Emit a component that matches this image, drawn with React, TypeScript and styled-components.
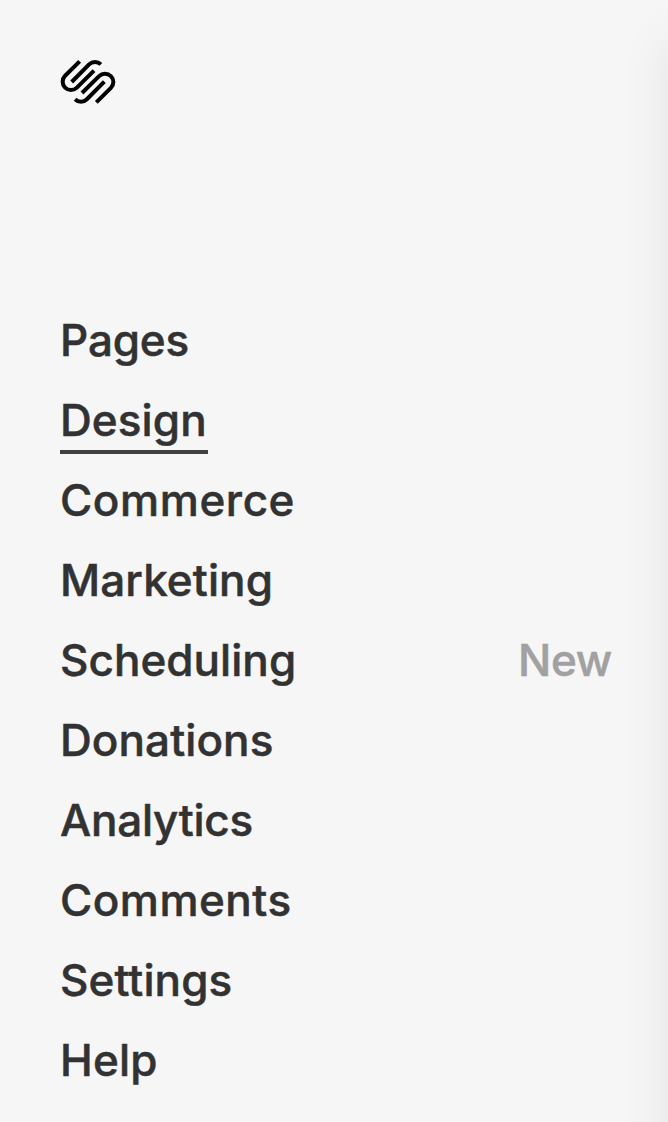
import React from "react";
import styled, { createGlobalStyle } from "styled-components";

const GlobalStyle = createGlobalStyle`
  html, body { margin: 0; background: #f6f6f6; }
  *, *::before, *::after { box-sizing: border-box; }
`;

const Sidebar = styled.aside`
  position: relative;
  display: flex;
  flex-direction: column;
  width: 100%;
  height: 1122px;
  padding: 56px 56px 0 60px;
  overflow: hidden;
  background: #f6f6f6;
  font-family: Inter, "Liberation Sans", sans-serif;
`;

const PreviewShadow = styled.div`
  position: absolute;
  top: 40px;
  left: 100%;
  width: 200px;
  height: 1400px;
  box-shadow: 0 0 48px rgba(0, 0, 0, 0.08);
`;

const Logo = styled.svg`
  display: block;
  width: 56px;
  height: 52px;
  fill: none;
  stroke: #000;
  stroke-width: 12;
`;

const Menu = styled.nav`
  display: flex;
  flex-direction: column;
  margin-top: 192px;
`;

const Item = styled.a`
  display: flex;
  align-items: flex-start;
  justify-content: space-between;
  height: 80px;
  color: #323232;
  font-size: 44px;
  font-weight: 500;
  line-height: 80px;
  text-decoration: none;
  -webkit-text-stroke: 0.5px currentColor;
`;

const Label = styled.span<{ $tracking: number; $active?: boolean }>`
  height: 74px;
  letter-spacing: ${(p) => p.$tracking}px;
  white-space: nowrap;
  ${(p) => p.$active && "width: 148px; border-bottom: 4px solid #404040;"}
`;

const Tag = styled.span`
  color: #a1a1a1;
  letter-spacing: -0.3px;
`;

type MenuItem = { label: string; tracking: number; active?: boolean; tag?: string };

const items: MenuItem[] = [
  { label: "Pages", tracking: -0.15 },
  { label: "Design", tracking: 0.1, active: true },
  { label: "Commerce", tracking: 0.6 },
  { label: "Marketing", tracking: 0.1 },
  { label: "Scheduling", tracking: 0.05 },
  { label: "Donations", tracking: 0.1 },
  { label: "Analytics", tracking: -0.25 },
  { label: "Comments", tracking: 0.5 },
  { label: "Settings", tracking: 0.1 },
  { label: "Help", tracking: 0.2 },
];
items[4].tag = "New";

export default function App() {
  return (
    <>
      <GlobalStyle />
      <Sidebar>
        <Logo viewBox="30 18 168 156" aria-label="Squarespace">
          <path d="M89 34 45.3 77.3A25 25 0 0 0 80.7 112.7L132 62" />
          <path d="M65 96 117.3 43.3A25 25 0 0 1 152.7 43.3" />
          <path d="M139 157 182.7 113.7A25 25 0 0 0 147.3 78.3L96 129" />
          <path d="M163 95 110.7 147.7A25 25 0 0 1 75.3 147.7" />
        </Logo>
        <Menu>
          {items.map((item) => (
            <Item key={item.label}>
              <Label $tracking={item.tracking} $active={item.active}>
                {item.label}
              </Label>
              {item.tag && <Tag>{item.tag}</Tag>}
            </Item>
          ))}
        </Menu>
        <PreviewShadow />
      </Sidebar>
    </>
  );
}
